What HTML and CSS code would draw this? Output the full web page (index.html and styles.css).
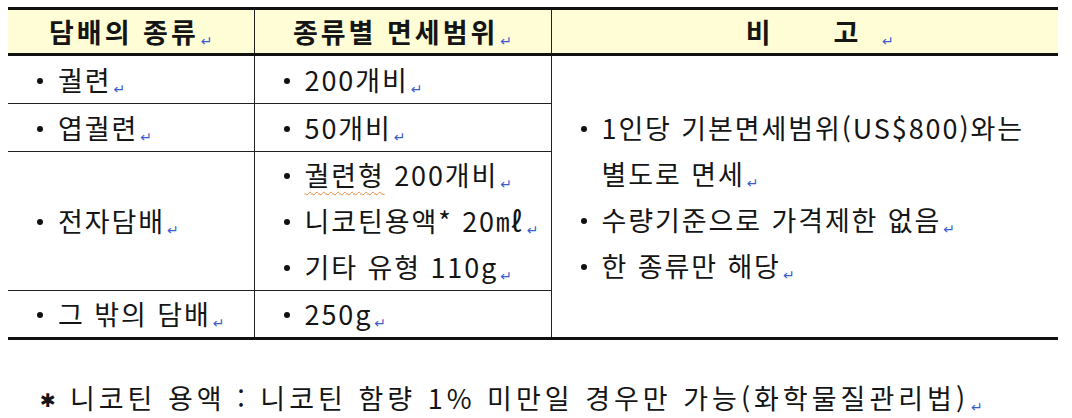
FILE: index.html
```html
<!DOCTYPE html>
<html lang="ko">
<head>
<meta charset="utf-8">
<link rel="stylesheet" href="styles.css">
</head>
<body>
<table class="tbl">
  <colgroup>
    <col class="c1"><col class="c2"><col class="c3">
  </colgroup>
  <thead>
    <tr>
      <th>담배의 종류<span class="rt">↵</span></th>
      <th>종류별 면세범위<span class="rt">↵</span></th>
      <th><span class="gap">비</span>고 <span class="rt rt-wide">↵</span></th>
    </tr>
  </thead>
  <tbody>
    <tr class="r1">
      <td><p class="li">궐련<span class="rt">↵</span></p></td>
      <td><p class="li">200개비<span class="rt">↵</span></p></td>
      <td class="note" rowspan="4">
        <p class="li">1인당 기본면세범위(US$800)와는<br>별도로 면세<span class="rt">↵</span></p>
        <p class="li">수량기준으로 가격제한 없음<span class="rt">↵</span></p>
        <p class="li">한 종류만 해당<span class="rt">↵</span></p>
      </td>
    </tr>
    <tr class="r2">
      <td><p class="li">엽궐련<span class="rt">↵</span></p></td>
      <td><p class="li">50개비<span class="rt">↵</span></p></td>
    </tr>
    <tr class="r3">
      <td><p class="li">전자담배<span class="rt">↵</span></p></td>
      <td>
        <p class="li"><span class="spell">궐련형</span> 200개비<span class="rt">↵</span></p>
        <p class="li">니코틴용액* 20㎖<span class="rt">↵</span></p>
        <p class="li">기타 유형 110g<span class="rt">↵</span></p>
      </td>
    </tr>
    <tr class="r4">
      <td><p class="li">그 밖의 담배<span class="rt">↵</span></p></td>
      <td><p class="li">250g<span class="rt">↵</span></p></td>
    </tr>
  </tbody>
</table>
<p class="foot"><span class="star">✱</span>니코틴 용액 : 니코틴 함량 1% 미만일 경우만 가능(화학물질관리법)<span class="rt">↵</span></p>
</body>
</html>
```
FILE: styles.css
```css
html, body {
  margin: 0;
  padding: 0;
  background: #fff;
}
body {
  padding: 7px 0 0 8px;
  font-family: "Noto Sans CJK KR", "Noto Sans", sans-serif;
  color: #151515;
}
.tbl {
  width: 1050px;
  border-collapse: collapse;
  table-layout: fixed;
  font-size: 27px;
}
.c1 { width: 246px; }
.c2 { width: 297px; }
.c3 { width: 507px; }
.tbl th {
  height: 43px;
  padding: 0;
  background: #fefdd6;
  font-weight: 700;
  font-size: 27px;
  letter-spacing: 3px;
  border-top: 3px solid #111;
  border-bottom: 3px solid #111;
  border-left: 1px solid #222;
  border-right: 1px solid #222;
  text-align: center;
  vertical-align: middle;
  line-height: 43px;
}
.gap { margin-right: 60px; margin-left: 30px; }
.tbl th:first-child, .tbl td:first-child { border-left: none; }
.tbl th:last-child, .tbl td.note { border-right: none; }
.tbl td {
  padding: 0 0 0 27px;
  border: 1px solid #222;
  vertical-align: middle;
}
.tbl tr.r1 td { height: 47px; }
.tbl tr.r2 td { height: 47px; }
.tbl tr.r3 td { height: 137px; }
.tbl tr.r4 td { height: 46px; border-bottom: 3px solid #111; }
.tbl td.note { border-bottom: 3px solid #111; }
.li {
  margin: 0;
  position: relative;
  padding-left: 23px;
  line-height: 46px;
  letter-spacing: 1.9px;
  white-space: nowrap;
}
.li::before {
  content: "";
  position: absolute;
  left: 2px;
  top: 21px;
  width: 6px;
  height: 6px;
  border-radius: 50%;
  background: #111;
}
.rt {
  display: inline-block;
  font-family: "DejaVu Sans", sans-serif;
  font-size: 14px;
  line-height: 1;
  color: #3a5ccc;
  margin-left: 2px;
  letter-spacing: 0;
  font-weight: 400;
  vertical-align: -3px;
}
.rt-wide { margin-left: 10px; }
.spell {
  text-decoration: underline wavy #e5893a;
  text-decoration-thickness: 1px;
  text-underline-offset: 5px;
}
.foot {
  margin: 38px 0 0 32px;
  font-size: 27px;
  line-height: 40px;
  letter-spacing: 4px;
  white-space: nowrap;
}
.star {
  font-family: "DejaVu Sans", sans-serif;
  font-size: 19px;
  vertical-align: 2px;
  margin-right: 14px;
  letter-spacing: 0;
}
```
